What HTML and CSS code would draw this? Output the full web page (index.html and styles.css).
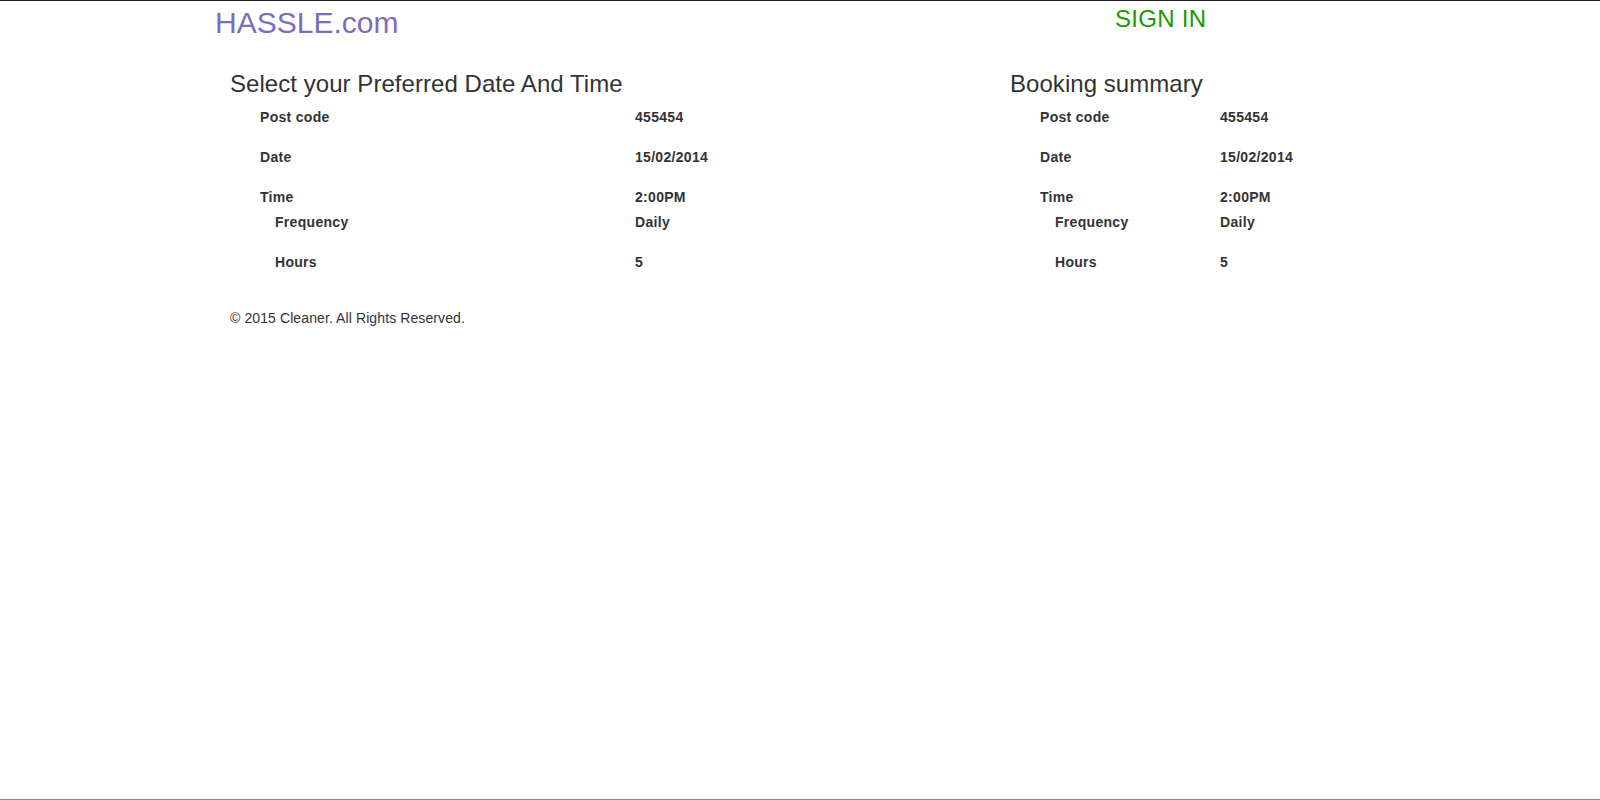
FILE: index.html
```html
<!DOCTYPE html>
<html lang="en">
<head>
<meta charset="utf-8">
<title>HASSLE.com - Booking</title>
<link rel="stylesheet" href="styles.css">
</head>
<body>
<header class="site-header">
  <div class="header-inner">
    <a class="brand" href="#">HASSLE.com</a>
    <a class="signin" href="#">SIGN IN</a>
  </div>
</header>
<main class="container">
  <div class="row">
    <section class="col-main">
      <h3 class="section-title">Select your Preferred Date And Time</h3>
      <div class="details">
        <div class="item"><span class="label">Post code</span><span class="value">455454</span></div>
        <div class="item"><span class="label">Date</span><span class="value">15/02/2014</span></div>
        <div class="item tight"><span class="label">Time</span><span class="value">2:00PM</span></div>
        <div class="item"><span class="label sub">Frequency</span><span class="value">Daily</span></div>
        <div class="item last"><span class="label sub">Hours</span><span class="value">5</span></div>
      </div>
    </section>
    <aside class="col-side">
      <h3 class="section-title">Booking summary</h3>
      <div class="details">
        <div class="item"><span class="label">Post code</span><span class="value">455454</span></div>
        <div class="item"><span class="label">Date</span><span class="value">15/02/2014</span></div>
        <div class="item tight"><span class="label">Time</span><span class="value">2:00PM</span></div>
        <div class="item"><span class="label sub">Frequency</span><span class="value">Daily</span></div>
        <div class="item last"><span class="label sub">Hours</span><span class="value">5</span></div>
      </div>
    </aside>
  </div>
  <footer class="site-footer">© 2015 Cleaner. All Rights Reserved.</footer>
</main>
</body>
</html>
```

FILE: styles.css
```css
* { box-sizing: border-box; }

html, body { height: 100%; }

body {
  margin: 0;
  min-height: 100vh;
  background: #fff;
  color: #333;
  font-family: "Liberation Sans", Arial, sans-serif;
  font-size: 14px;
  line-height: 20px;
  border-top: 1px solid #1a1a1a;
  border-bottom: 1px solid #a98081;
}

a { text-decoration: none; }

.site-header {
  height: 50px;
}

.header-inner {
  width: 1170px;
  margin: 0 auto;
  display: grid;
  grid-template-columns: 900px 1fr;
  align-items: start;
}

.brand {
  font-size: 30px;
  line-height: 40px;
  margin-top: 2px;
  color: #7d6dc0;
  justify-self: start;
}

.signin {
  font-size: 24px;
  line-height: 30px;
  margin-top: 3px;
  color: #1a9a00;
  letter-spacing: 0.3px;
  justify-self: start;
}

.container {
  width: 1170px;
  margin: 0 auto;
  padding: 0 15px;
}

.row {
  display: grid;
  grid-template-columns: 750px 1fr;
  column-gap: 30px;
}

.col-main, .col-side { min-width: 0; }

.section-title {
  margin: 20px 0 10px;
  font-size: 24px;
  line-height: 26.4px;
  font-weight: 500;
  color: #333;
  letter-spacing: 0.05px;
}

.details {
  margin-left: 30px;
}

.col-main .details { width: 720px; }
.col-side .details { width: 330px; }

.item {
  display: grid;
  grid-template-columns: 1fr 1fr;
  font-weight: bold;
  letter-spacing: 0.3px;
  margin-bottom: 20px;
}

.item.tight { margin-bottom: 5px; }
.item.last { margin-bottom: 0; }

.label.sub { padding-left: 15px; }

.value { padding-left: 15px; }

.site-footer {
  margin-top: 36px;
  font-size: 14px;
  line-height: 20px;
  color: #333;
  letter-spacing: 0.1px;
}
```
